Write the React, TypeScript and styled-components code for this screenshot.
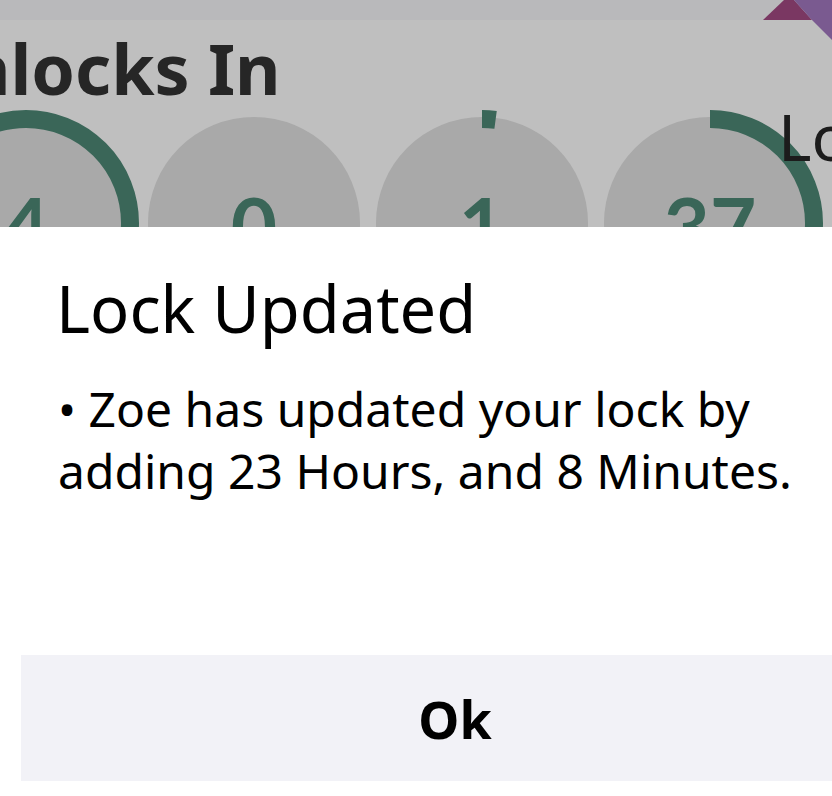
import styled, { createGlobalStyle } from 'styled-components'

const GlobalStyle = createGlobalStyle`
  html, body {
    margin: 0;
    padding: 0;
    background: #ffffff;
  }
  body {
    font-family: 'Noto Sans', 'Open Sans', sans-serif;
  }
`

const RING_R = 104
const CIRC = 2 * Math.PI * RING_R

type DialProps = {
  value: number
  progress: number
}

function Dial({ value, progress }: DialProps) {
  return (
    <DialBox>
      <DialSvg width='226' height='226' viewBox='0 0 226 226'>
        <circle cx='113' cy='113' r='106' fill='#a9a9a9' />
        {progress > 0 && (
          <circle
            cx='113'
            cy='113'
            r={RING_R}
            fill='none'
            stroke='#3a6658'
            strokeWidth='18'
            strokeDasharray={`${CIRC * progress} ${CIRC}`}
            transform='rotate(-90 113 113)'
          />
        )}
      </DialSvg>
      <DialValue>{value}</DialValue>
    </DialBox>
  )
}

export default function App() {
  return (
    <>
      <GlobalStyle />
      <Screen>
        <Backdrop>
          <TopBar>
            <Badge width='69' height='40' viewBox='0 0 69 40'>
              <polygon points='0,20 21,0 31,0 49,20' fill='#7a3762' />
              <polygon points='31,0 69,0 69,40 49,20' fill='#7a5a90' />
            </Badge>
          </TopBar>
          <Heading>Unlocks In</Heading>
          <DialRow>
            <Dial value={4} progress={1} />
            <Dial value={0} progress={0} />
            <Dial value={1} progress={0.021} />
            <Dial value={37} progress={37 / 60} />
          </DialRow>
          <SideLabel>Lock</SideLabel>
        </Backdrop>
        <Sheet>
          <Title>Lock Updated</Title>
          <Message>• Zoe has updated your lock by adding 23 Hours, and 8 Minutes.</Message>
          <OkButton>Ok</OkButton>
        </Sheet>
      </Screen>
    </>
  )
}

const Screen = styled.div`
  width: 832px;
  height: 796px;
  overflow: hidden;
  display: flex;
  flex-direction: column;
`

const Backdrop = styled.div`
  position: relative;
  height: 227px;
  flex-shrink: 0;
  overflow: hidden;
  background: #bfbfbf;
`

const TopBar = styled.div`
  position: relative;
  height: 20px;
  background: #b9b9bb;
`

const Badge = styled.svg`
  position: absolute;
  top: 0;
  right: 0;
  display: block;
`

const Heading = styled.h1`
  margin: 13px 0 0 -88px;
  font-size: 70px;
  line-height: 70px;
  font-weight: 700;
  color: #262626;
  white-space: nowrap;
`

const DialRow = styled.div`
  display: flex;
  gap: 2px;
  margin: 7px 0 0 -87px;
`

const DialBox = styled.div`
  position: relative;
  width: 226px;
  height: 226px;
  flex-shrink: 0;
  display: flex;
  align-items: center;
  justify-content: center;
`

const DialSvg = styled.svg`
  position: absolute;
  inset: 0;
  display: block;
`

const DialValue = styled.span`
  position: relative;
  padding-top: 4px;
  font-family: 'Lato', 'Noto Sans', sans-serif;
  font-weight: 700;
  font-size: 80px;
  line-height: 1;
  color: #3a6658;
`

const SideLabel = styled.span`
  position: absolute;
  left: 778px;
  top: 105px;
  font-size: 64px;
  line-height: 64px;
  color: #1c1c1c;
  white-space: nowrap;
`

const Sheet = styled.div`
  flex: 1;
  width: 910px;
  background: #ffffff;
  display: flex;
  flex-direction: column;
  padding-top: 42px;
  box-sizing: border-box;
`

const Title = styled.h2`
  margin: 0 56px;
  font-size: 65px;
  line-height: 79px;
  font-weight: 400;
  color: #000000;
`

const Message = styled.p`
  margin: 30px 0 0 58px;
  width: 760px;
  font-size: 48px;
  line-height: 62px;
  color: #000000;
`

const OkButton = styled.button`
  margin: auto 21px 15px 21px;
  height: 126px;
  flex-shrink: 0;
  border: none;
  background: #f2f2f7;
  font-family: 'Noto Sans', 'Open Sans', sans-serif;
  font-size: 52px;
  font-weight: 700;
  color: #000000;
`
